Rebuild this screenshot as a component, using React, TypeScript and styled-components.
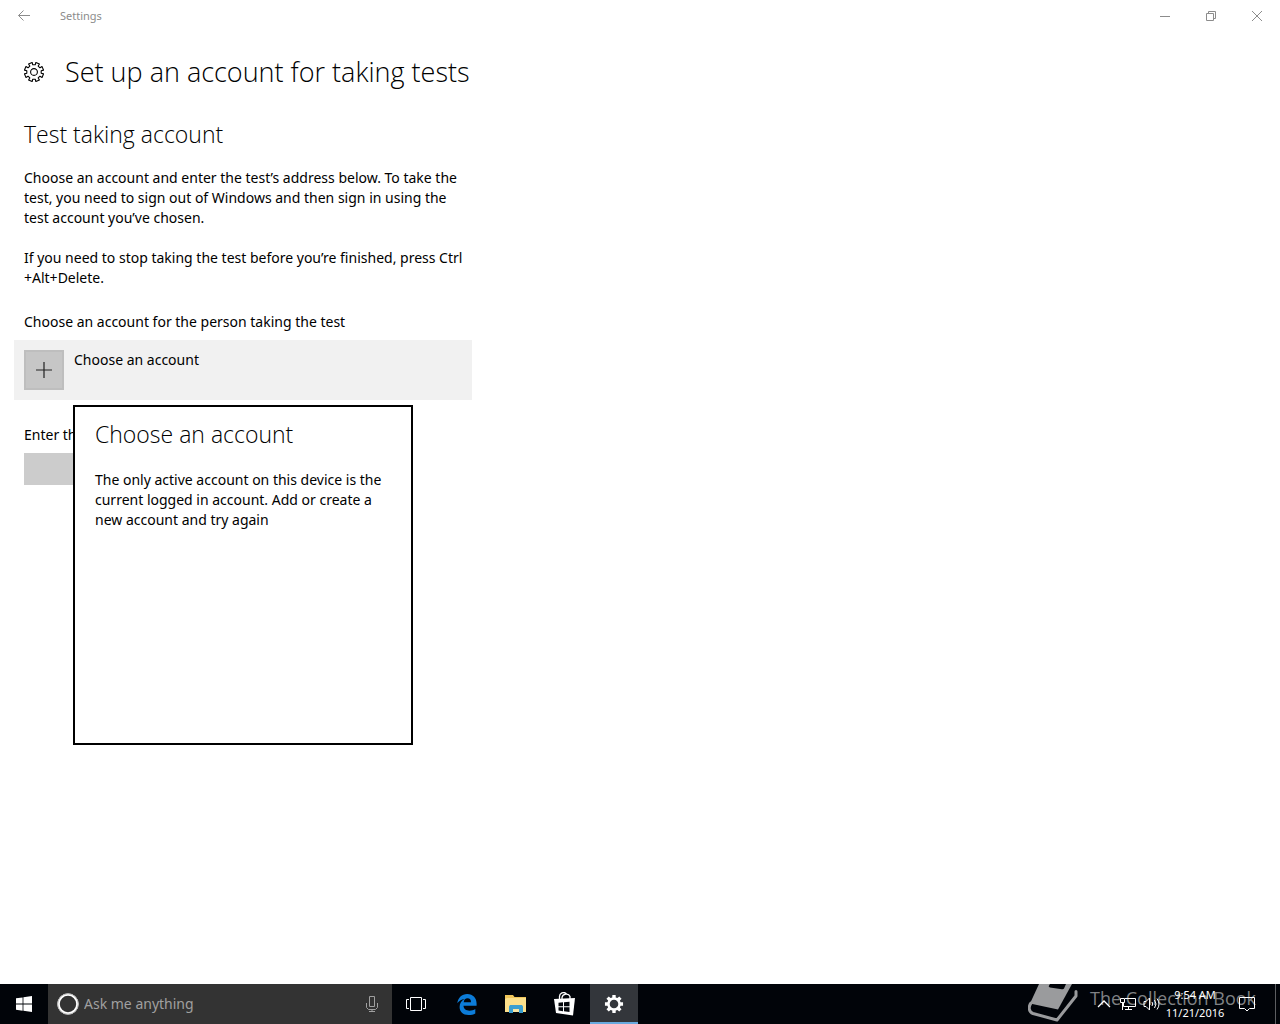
import React from "react";
import styled, { createGlobalStyle } from "styled-components";

const GlobalStyle = createGlobalStyle`
  * { box-sizing: border-box; }
  body {
    margin: 0;
    background: #fff;
    color: #000;
    font: 14px/20px "Noto Sans", "Open Sans", sans-serif;
  }
  h1, h2, p { margin: 0; font-weight: 300; }
  h1, h2 { font-family: "Open Sans", "Noto Sans", sans-serif; }
  button {
    margin: 0;
    padding: 0;
    border: 0;
    background: none;
    color: inherit;
    font: inherit;
  }
  svg { display: block; flex: none; }
`;

const Screen = styled.div`
  display: flex;
  flex-direction: column;
  min-height: 100vh;
`;

const TitleBar = styled.header`
  display: flex;
  align-items: center;
  height: 32px;
  color: #8c8c8c;
`;

const BarButton = styled.button<{ $width: number }>`
  display: flex;
  align-items: center;
  justify-content: center;
  width: ${(p) => p.$width}px;
  height: 32px;
`;

const WindowName = styled.span`
  flex: 1;
  padding-left: 12px;
  font-size: 11px;
`;

const Page = styled.main`
  flex: 1;
  width: 100%;
  max-width: 472px;
  padding-left: 24px;
`;

const PageHeader = styled.div`
  display: flex;
  align-items: center;
  gap: 21px;
  height: 80px;
`;

const PageTitle = styled.h1`
  font-size: 27px;
  line-height: 40px;
  white-space: nowrap;
`;

const SectionTitle = styled.h2`
  font-size: 23px;
  line-height: 32px;
`;

const Description = styled.p`
  margin-top: 20px;
  font-weight: 400;
  white-space: nowrap;
`;

const Intro = styled.div`
  padding: 6px 0 24px;

  ${SectionTitle} + ${Description} {
    margin-top: 18px;
  }
`;

const Picker = styled.section`
  position: relative;
  margin-left: -10px;
`;

const PickerLabel = styled.div`
  padding: 0 0 8px 10px;
`;

const AccountButton = styled.button`
  display: flex;
  align-items: flex-start;
  gap: 10px;
  width: 100%;
  padding: 10px;
  background: #f1f1f1;
  text-align: left;
`;

const Avatar = styled.span`
  display: flex;
  align-items: center;
  justify-content: center;
  width: 40px;
  height: 40px;
  border: 2px solid #bebebe;
  background: #c6c6c6;
`;

const Flyout = styled.div`
  position: absolute;
  top: calc(100% + 5px);
  left: 59px;
  width: 340px;
  height: 340px;
  padding: 11px 20px;
  border: 2px solid #000;
  background: #fff;
`;

const Field = styled.div`
  display: flex;
  flex-direction: column;
  gap: 8px;
  padding-top: 25px;
`;

const AddressInput = styled.input`
  width: 300px;
  max-width: 100%;
  height: 32px;
  padding: 0 10px;
  border: 0;
  border-radius: 0;
  background: #ccc;
  font: inherit;
`;

const Taskbar = styled.footer`
  position: relative;
  display: flex;
  height: 40px;
  background: #010409;
  color: #fff;
`;

const Search = styled.label`
  display: flex;
  align-items: center;
  gap: 5px;
  width: 344px;
  padding: 0 13px 0 9px;
  background: #333;
  color: #a0a0a0;
`;

const SearchInput = styled.input`
  flex: 1;
  min-width: 0;
  padding: 0;
  border: 0;
  background: none;
  color: inherit;
  font: inherit;

  &::placeholder {
    color: inherit;
    opacity: 1;
  }
`;

const Apps = styled.nav`
  display: flex;
  flex: 1;
  gap: 1px;
`;

const TaskButton = styled.button<{ $active?: boolean }>`
  display: flex;
  align-items: center;
  justify-content: center;
  width: 48px;
  height: 40px;
  background: ${(p) => (p.$active ? "#33363b" : "none")};
  box-shadow: ${(p) => (p.$active ? "inset 0 -2px #68a9de" : "none")};
`;

const TaskViewButton = styled(TaskButton)`
  margin-right: 2px;
`;

const Tray = styled.div`
  position: relative;
  z-index: 1;
  display: flex;
  align-items: center;
`;

const TrayButton = styled.button<{ $wide?: boolean }>`
  display: flex;
  align-items: center;
  justify-content: center;
  width: ${(p) => (p.$wide ? 42 : 24)}px;
  height: 40px;
`;

const Clock = styled.button`
  width: 62px;
  font-size: 11px;
  line-height: 18px;
  white-space: nowrap;
`;

const ShowDesktop = styled.button`
  width: 5px;
  height: 40px;
  margin-left: 7px;
  border-left: 1px solid #5c5e61;
`;

const Watermark = styled.div`
  position: absolute;
  top: 0;
  right: 24px;
  display: flex;
  gap: 11px;
  color: #7f8184;
  font: 18px/28px "Open Sans", "Noto Sans", sans-serif;
  pointer-events: none;
  white-space: nowrap;
`;

/* Outline of a cog centred on 0,0 with eight flat teeth. */
function cogPath(outer: number, inner: number, tip: number, root: number) {
  const points: string[] = [];
  for (let i = 0; i < 8; i++) {
    const middle = (i * Math.PI) / 4;
    const corners: [number, number][] = [
      [inner, -root],
      [outer, -tip],
      [outer, tip],
      [inner, root],
    ];
    corners.forEach(([r, offset]) => {
      const a = middle + offset;
      points.push(`${(r * Math.sin(a)).toFixed(2)} ${(-r * Math.cos(a)).toFixed(2)}`);
    });
  }
  return `M${points.join("L")}Z`;
}

const BackIcon = () => (
  <svg width="14" height="12" fill="none" stroke="currentColor">
    <path d="M1.5 5.5H13M6.5.5l-5 5 5 5" />
  </svg>
);

const MinimizeIcon = () => (
  <svg width="10" height="10" fill="none" stroke="currentColor">
    <path d="M0 5.5h10" />
  </svg>
);

const RestoreIcon = () => (
  <svg width="10" height="10" fill="none" stroke="currentColor">
    <path d="M.5 2.5h7v7h-7zM2.5 2.5v-2h7v7h-2" />
  </svg>
);

const CloseIcon = () => (
  <svg width="10" height="10" fill="none" stroke="currentColor">
    <path d="M0 0l10 10M10 0L0 10" />
  </svg>
);

const SettingsIcon = () => (
  <svg width="20" height="20" viewBox="-10 -10 20 20" fill="none" stroke="#000" strokeLinejoin="round">
    <g transform="rotate(22.5)">
      <path d={cogPath(9.7, 7.3, 0.2, 0.22)} strokeWidth="1.1" />
    </g>
    <circle r="3.4" strokeWidth="1.1" />
  </svg>
);

const PlusIcon = () => (
  <svg width="16" height="16" fill="none" stroke="#222" strokeWidth="1.2">
    <path d="M0 8h16M8 0v16" />
  </svg>
);

const StartIcon = () => (
  <svg width="16" height="16" fill="#fff">
    <path d="M0 2.3L6.6 1.4v6.2H0zM7.4 1.3L16 0v7.6H7.4zM0 8.4h6.6v6.3L0 13.7zM7.4 8.4H16V16l-8.6-1.2z" />
  </svg>
);

const CortanaIcon = () => (
  <svg width="22" height="22" fill="none">
    <circle cx="11" cy="11" r="9.4" stroke="#fff" strokeWidth="2.4" />
    <circle cx="11" cy="11" r="10.3" stroke="#b8b8b8" />
  </svg>
);

const MicIcon = () => (
  <svg width="14" height="18" fill="none" stroke="#a0a0a0">
    <path d="M4.5 1.5h5v10h-5zM1.5 8v4.5l2 2h7l2-2V8M7 14.5v2.5M4 16.5h6" />
  </svg>
);

const TaskViewIcon = () => (
  <svg width="20" height="14" fill="none" stroke="#fff">
    <path d="M4.5.5h11v13h-11zM3 2.5H.5v9H3M17 2.5h2.5v9H17" />
  </svg>
);

const EdgeIcon = () => (
  <svg width="20" height="21" viewBox="0 0 20 21" fill="#0c7cd8">
    <path d="M.3 9.3C1 3.7 4.8 0 10.2 0c6 0 9.4 4.3 9.4 9.6v2.2H6.5c.2 3.4 2.8 4.9 6 4.9 2.2 0 4.2-.6 5.8-1.6v4.3c-1.7 1-4 1.6-6.8 1.6-5.6 0-8.9-3.3-8.9-8 0-3.5 1.8-6.4 4.8-7.9C4.2 5.7 1.9 7 .3 9.3zM6.7 8.3H14c.1-2.6-1.200-4-3.500-4-2.100 0-3.500 1.500-3.800 4z" />
  </svg>
);

const ExplorerIcon = () => (
  <svg width="22" height="20" viewBox="0 0 22 20">
    <path d="M0 1h8l1.5 2H21v15H0z" fill="#f0c65a" />
    <path d="M0 5l2-1h19v14H0z" fill="#fce08b" />
    <path d="M4 19v-6.500l1-1.500h12l1 1.500V19h-4v-4H8v4z" fill="#3b9fd0" />
    <path d="M8 15h6v3H8z" fill="#f9e5a4" />
  </svg>
);

const StoreIcon = () => (
  <svg width="22" height="24" viewBox="0 0 22 24">
    <path d="M5.5 8V5a4 4 0 0 1 7-3M8 7V5.5C8.500 2 14.500.5 16 4.500V8" fill="none" stroke="#fff" strokeWidth="1.3" />
    <path d="M0 7l21-1-2 17.500L2 21z" fill="#fff" />
    <path d="M4.500 10.700l4.500-.4v4H4.500zM10 10.200l5.500-.5v4.600H10zM4.500 15.200H9v4l-4.500-.6zM10 15.200h5.500V20L10 19.300z" fill="#05080d" />
  </svg>
);

const TaskCogIcon = () => (
  <svg width="20" height="20" viewBox="-10 -10 20 20">
    <path
      fillRule="evenodd"
      fill="#fff"
      d={cogPath(9.2, 6.8, 0.18, 0.26) + "M-4.3 0a4.3 4.3 0 1 0 8.6 0a4.3 4.3 0 1 0-8.6 0Z"}
    />
  </svg>
);

const ChevronIcon = () => (
  <svg width="14" height="8" fill="none" stroke="#fff" strokeWidth="1.3">
    <path d="M1 7l6-6 6 6" />
  </svg>
);

const NetworkIcon = () => (
  <svg width="16" height="14" fill="none" stroke="#fff">
    <path d="M5 1.5h10.5v8H3.5V6M.5 1.5h4v4h-4zM2.5 5.5V13M8.5 9.5v3M5 12.5h7" />
  </svg>
);

const VolumeIcon = () => (
  <svg width="18" height="14" fill="none" stroke="#fff">
    <path d="M1 4.5h2L6.5 1v12L3 9.5H1z" />
    <path d="M9 5q1.5 2 0 4M11.5 3q3 4 0 8M14 1.5q4 5.5 0 11" />
  </svg>
);

const ActionIcon = () => (
  <svg width="16" height="16" fill="none" stroke="#fff">
    <path d="M.5 1.500h15v11h-5L8 15l-2.500-2.500h-5z" />
  </svg>
);

const BookIcon = () => (
  <svg width="51" height="40" viewBox="0 0 51 40">
    <path d="M11 0H44L30 25.500 2 19.500z" fill="#9a9b9d" />
    <path d="M22 0H38l-2 4.500q-.5 1-2 .8l-12-1.800q-2-.5-1-2z" fill="#010409" />
    <path
      d="M3 19C0 23 1 28 5 29.500L29 36 48 12V7.500"
      fill="none"
      stroke="#9a9b9d"
      strokeWidth="3"
      strokeLinecap="round"
      strokeLinejoin="round"
    />
  </svg>
);

export default function App() {
  return (
    <Screen>
      <GlobalStyle />
      <TitleBar>
        <BarButton $width={48} aria-label="Back"><BackIcon /></BarButton>
        <WindowName>Settings</WindowName>
        <BarButton $width={46} aria-label="Minimize"><MinimizeIcon /></BarButton>
        <BarButton $width={46} aria-label="Restore"><RestoreIcon /></BarButton>
        <BarButton $width={46} aria-label="Close"><CloseIcon /></BarButton>
      </TitleBar>

      <Page>
        <PageHeader>
          <SettingsIcon />
          <PageTitle>Set up an account for taking tests</PageTitle>
        </PageHeader>
        <Intro>
          <SectionTitle>Test taking account</SectionTitle>
          <Description>
            Choose an account and enter the test’s address below. To take the<br />
            test, you need to sign out of Windows and then sign in using the<br />
            test account you’ve chosen.
          </Description>
          <Description>
            If you need to stop taking the test before you’re finished, press Ctrl<br />
            +Alt+Delete.
          </Description>
        </Intro>
        <Picker>
          <PickerLabel id="picker-label">Choose an account for the person taking the test</PickerLabel>
          <AccountButton aria-describedby="picker-label">
            <Avatar><PlusIcon /></Avatar>
            Choose an account
          </AccountButton>
          <Flyout role="dialog" aria-labelledby="flyout-title">
            <SectionTitle id="flyout-title">Choose an account</SectionTitle>
            <Description>
              The only active account on this device is the<br />
              current logged in account. Add or create a<br />
              new account and try again
            </Description>
          </Flyout>
        </Picker>
        <Field>
          <label htmlFor="address">Enter the test’s web address</label>
          <AddressInput id="address" type="url" disabled />
        </Field>
      </Page>

      <Taskbar>
        <TaskButton aria-label="Start"><StartIcon /></TaskButton>
        <Search>
          <CortanaIcon />
          <SearchInput type="text" placeholder="Ask me anything" aria-label="Search" />
          <MicIcon />
        </Search>
        <Apps>
          <TaskViewButton aria-label="Task view"><TaskViewIcon /></TaskViewButton>
          <TaskButton aria-label="Edge"><EdgeIcon /></TaskButton>
          <TaskButton aria-label="File Explorer"><ExplorerIcon /></TaskButton>
          <TaskButton aria-label="Store"><StoreIcon /></TaskButton>
          <TaskButton $active aria-label="Settings"><TaskCogIcon /></TaskButton>
        </Apps>
        <Watermark><BookIcon />The Collection Book</Watermark>
        <Tray>
          <TrayButton aria-label="Show hidden icons"><ChevronIcon /></TrayButton>
          <TrayButton aria-label="Network"><NetworkIcon /></TrayButton>
          <TrayButton aria-label="Volume"><VolumeIcon /></TrayButton>
          <Clock>9:54 AM<br />11/21/2016</Clock>
          <TrayButton $wide aria-label="Notifications"><ActionIcon /></TrayButton>
          <ShowDesktop aria-label="Show desktop" />
        </Tray>
      </Taskbar>
    </Screen>
  );
}
